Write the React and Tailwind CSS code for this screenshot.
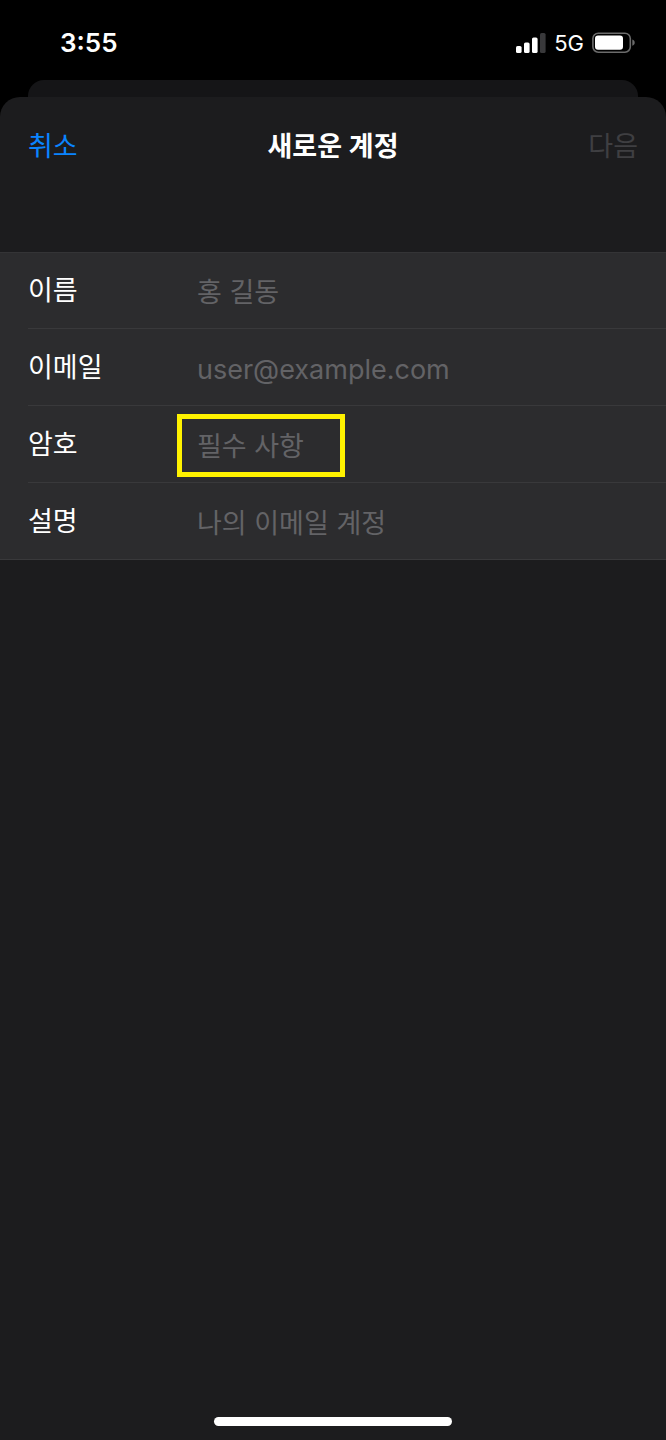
const fields = [
  {
    id: "name",
    label: "이름",
    type: "text",
    placeholder: "홍 길동",
  },
  {
    id: "email",
    label: "이메일",
    type: "email",
    placeholder: "user@example.com",
  },
  {
    id: "password",
    label: "암호",
    type: "password",
    placeholder: "필수 사항",
    highlighted: true,
  },
  {
    id: "description",
    label: "설명",
    type: "text",
    placeholder: "나의 이메일 계정",
  },
];

function SignalIcon() {
  return (
    <svg width="30" height="22" viewBox="0 0 30 22" fill="white">
      <rect x="0" y="14" width="5.6" height="7" rx="1.6" />
      <rect x="8" y="10.5" width="5.6" height="10.5" rx="1.6" />
      <rect x="16" y="5.5" width="5.6" height="15.5" rx="1.6" />
      <rect x="24" y="1" width="5.6" height="20" rx="1.6" fill="#39393b" />
    </svg>
  );
}

function BatteryIcon() {
  return (
    <svg width="44" height="22" viewBox="0 0 44 22" fill="none">
      <rect
        x="0.9"
        y="1.2"
        width="37.4"
        height="19"
        rx="5.4"
        stroke="#6b6b6b"
        strokeWidth="1.6"
      />
      <rect x="3" y="3.6" width="28" height="14.2" rx="3" fill="white" />
      <path
        d="M40.3 7.6c1.6.6 2.4 1.7 2.4 3.1s-.8 2.5-2.4 3.1z"
        fill="#6b6b6b"
      />
    </svg>
  );
}

function StatusBar() {
  return (
    <header className="flex h-20 items-center justify-between bg-black pt-1.5 pr-[30px] pl-15 text-white">
      <span className="text-[26px] leading-8 font-semibold">3:55</span>
      <div className="flex items-center gap-2">
        <SignalIcon />
        <span className="text-[22px] leading-8">5G</span>
        <BatteryIcon />
      </div>
    </header>
  );
}

function Field({ id, label, type, placeholder, highlighted }) {
  return (
    <div className="group flex pl-7">
      <div className="flex h-[77px] flex-1 items-center border-b border-[#39393b] pt-0.5 group-last:border-transparent">
        <label htmlFor={id} className="w-[169px] text-white">
          {label}
        </label>
        <div className="relative flex-1 pt-1">
          <input
            id={id}
            type={type}
            placeholder={placeholder}
            className="w-full bg-transparent text-white outline-none placeholder:text-[#636366]"
          />
          {/* Callout around the required field */}
          {highlighted && (
            <span className="pointer-events-none absolute inset-y-0 -left-5 my-auto h-[63px] w-42 border-5 border-[#fff200]" />
          )}
        </div>
      </div>
    </div>
  );
}

export default function App() {
  return (
    <div className="flex min-h-screen flex-col bg-black font-['Inter','Noto_Sans_CJK_KR',sans-serif] text-[27px] leading-10">
      <StatusBar />

      {/* Card behind the sheet */}
      <div className="mx-7 h-[17px] rounded-t-2xl bg-[#151517]" />

      <main className="flex flex-1 flex-col rounded-t-[20px] bg-[#1c1c1e]">
        <nav className="grid grid-cols-3 items-center px-7 pt-[30px]">
          <button type="button" className="justify-self-start text-[#0a84ff]">
            취소
          </button>
          <h1 className="justify-self-center font-semibold text-white">
            새로운 계정
          </h1>
          <button
            type="button"
            disabled
            className="justify-self-end text-[#3f3f42]"
          >
            다음
          </button>
        </nav>

        <form className="mt-[85px] bg-[#2c2c2e] shadow-[inset_0_1px_0_#343436,inset_0_-1px_0_#39393b]">
          {fields.map((field) => (
            <Field key={field.id} {...field} />
          ))}
        </form>

        <div className="mx-auto mt-auto mb-[14px] h-[9px] w-[238px] rounded-full bg-white" />
      </main>
    </div>
  );
}
